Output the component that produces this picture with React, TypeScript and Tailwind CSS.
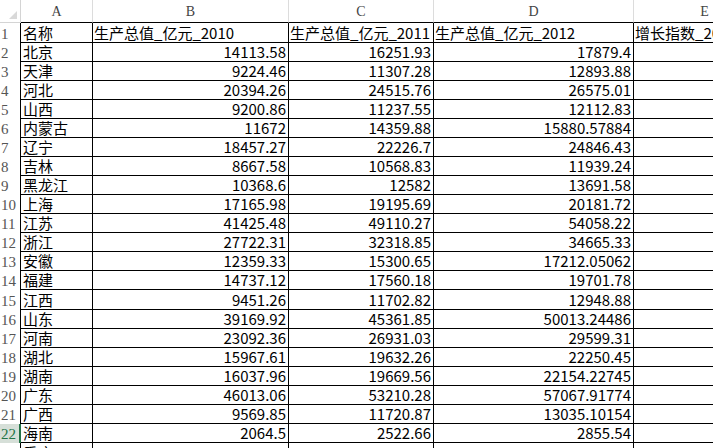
import React from "react";

const data: [string, string, string, string][] = [
  ["北京", "14113.58", "16251.93", "17879.4"],
  ["天津", "9224.46", "11307.28", "12893.88"],
  ["河北", "20394.26", "24515.76", "26575.01"],
  ["山西", "9200.86", "11237.55", "12112.83"],
  ["内蒙古", "11672", "14359.88", "15880.57884"],
  ["辽宁", "18457.27", "22226.7", "24846.43"],
  ["吉林", "8667.58", "10568.83", "11939.24"],
  ["黑龙江", "10368.6", "12582", "13691.58"],
  ["上海", "17165.98", "19195.69", "20181.72"],
  ["江苏", "41425.48", "49110.27", "54058.22"],
  ["浙江", "27722.31", "32318.85", "34665.33"],
  ["安徽", "12359.33", "15300.65", "17212.05062"],
  ["福建", "14737.12", "17560.18", "19701.78"],
  ["江西", "9451.26", "11702.82", "12948.88"],
  ["山东", "39169.92", "45361.85", "50013.24486"],
  ["河南", "23092.36", "26931.03", "29599.31"],
  ["湖北", "15967.61", "19632.26", "22250.45"],
  ["湖南", "16037.96", "19669.56", "22154.22745"],
  ["广东", "46013.06", "53210.28", "57067.91774"],
  ["广西", "9569.85", "11720.87", "13035.10154"],
  ["海南", "2064.5", "2522.66", "2855.54"],
  ["重庆", "7925.58", "10011.37", "11409.6"],
];

const CELL =
  "shrink-0 flex items-end text-[15px] leading-[18px] text-black border-r border-black whitespace-nowrap font-['Noto_Sans_CJK_SC','Noto_Sans',sans-serif]";

function Row({
  num,
  cells,
  tall,
  selected,
  last,
}: {
  num: number;
  cells: string[];
  tall?: boolean;
  selected?: boolean;
  last?: boolean;
}) {
  const h = tall ? "h-[20px]" : "h-[19px]";
  const bb = last ? "" : "border-b";
  const isHeader = num === 1;
  const align = isHeader ? "justify-start pl-[1px]" : "justify-end pr-[2px]";
  return (
    <div className={`flex ${h} shrink-0`}>
      <div
        className={`w-[21px] shrink-0 flex items-end pl-[1px] text-[15px] leading-[18px] font-['Liberation_Serif',serif] ${
          selected
            ? "bg-[#d6dfd8] text-[#217346] border-r-2 border-[#217346]"
            : "bg-white text-[#555] border-r border-black"
        }`}
      >
        {num}
      </div>
      <div className={`w-[72px] pl-[2px] ${CELL} ${bb}`}>{cells[0]}</div>
      <div className={`w-[196px] ${align} ${CELL} ${bb}`}>{cells[1]}</div>
      <div className={`w-[145px] ${align} ${CELL} ${bb}`}>{cells[2]}</div>
      <div className={`w-[200px] ${align} ${CELL} ${bb}`}>{cells[3]}</div>
      <div className={`w-[142px] pl-[1px] ${CELL} ${bb}`}>{cells[4] ?? ""}</div>
    </div>
  );
}

const COLS: [string, string][] = [
  ["A", "w-[72px]"],
  ["B", "w-[196px]"],
  ["C", "w-[145px]"],
  ["D", "w-[200px]"],
  ["E", "w-[142px]"],
];

export default function App() {
  const header = ["名称", "生产总值_亿元_2010", "生产总值_亿元_2011", "生产总值_亿元_2012", "增长指数_2013"];
  return (
    <div className="w-[713px] h-[448px] overflow-hidden bg-white">
      <div className="flex flex-col w-[776px]">
        <div className="flex h-[23px] shrink-0">
          <div className="w-[21px] shrink-0 relative border-r border-b border-[#d4d4d4] bg-white">
            <div className="absolute right-[3px] bottom-[3px] w-0 h-0 border-l-[8px] border-l-transparent border-b-[8px] border-b-[#d9d9d9]" />
          </div>
          {COLS.map(([l, w]) => (
            <div
              key={l}
              className={`${w} shrink-0 flex items-center justify-center text-[14px] text-[#444] border-r border-[#dcdcdc] border-b border-b-black bg-white font-['Liberation_Serif',serif]`}
            >
              {l}
            </div>
          ))}
        </div>
        <Row num={1} cells={header} tall />
        {data.map((r, i) => (
          <Row
            key={i}
            num={i + 2}
            cells={r}
            tall={i + 2 === 15}
            selected={i + 2 === 22}
            last={i + 2 === 23}
          />
        ))}
      </div>
    </div>
  );
}
